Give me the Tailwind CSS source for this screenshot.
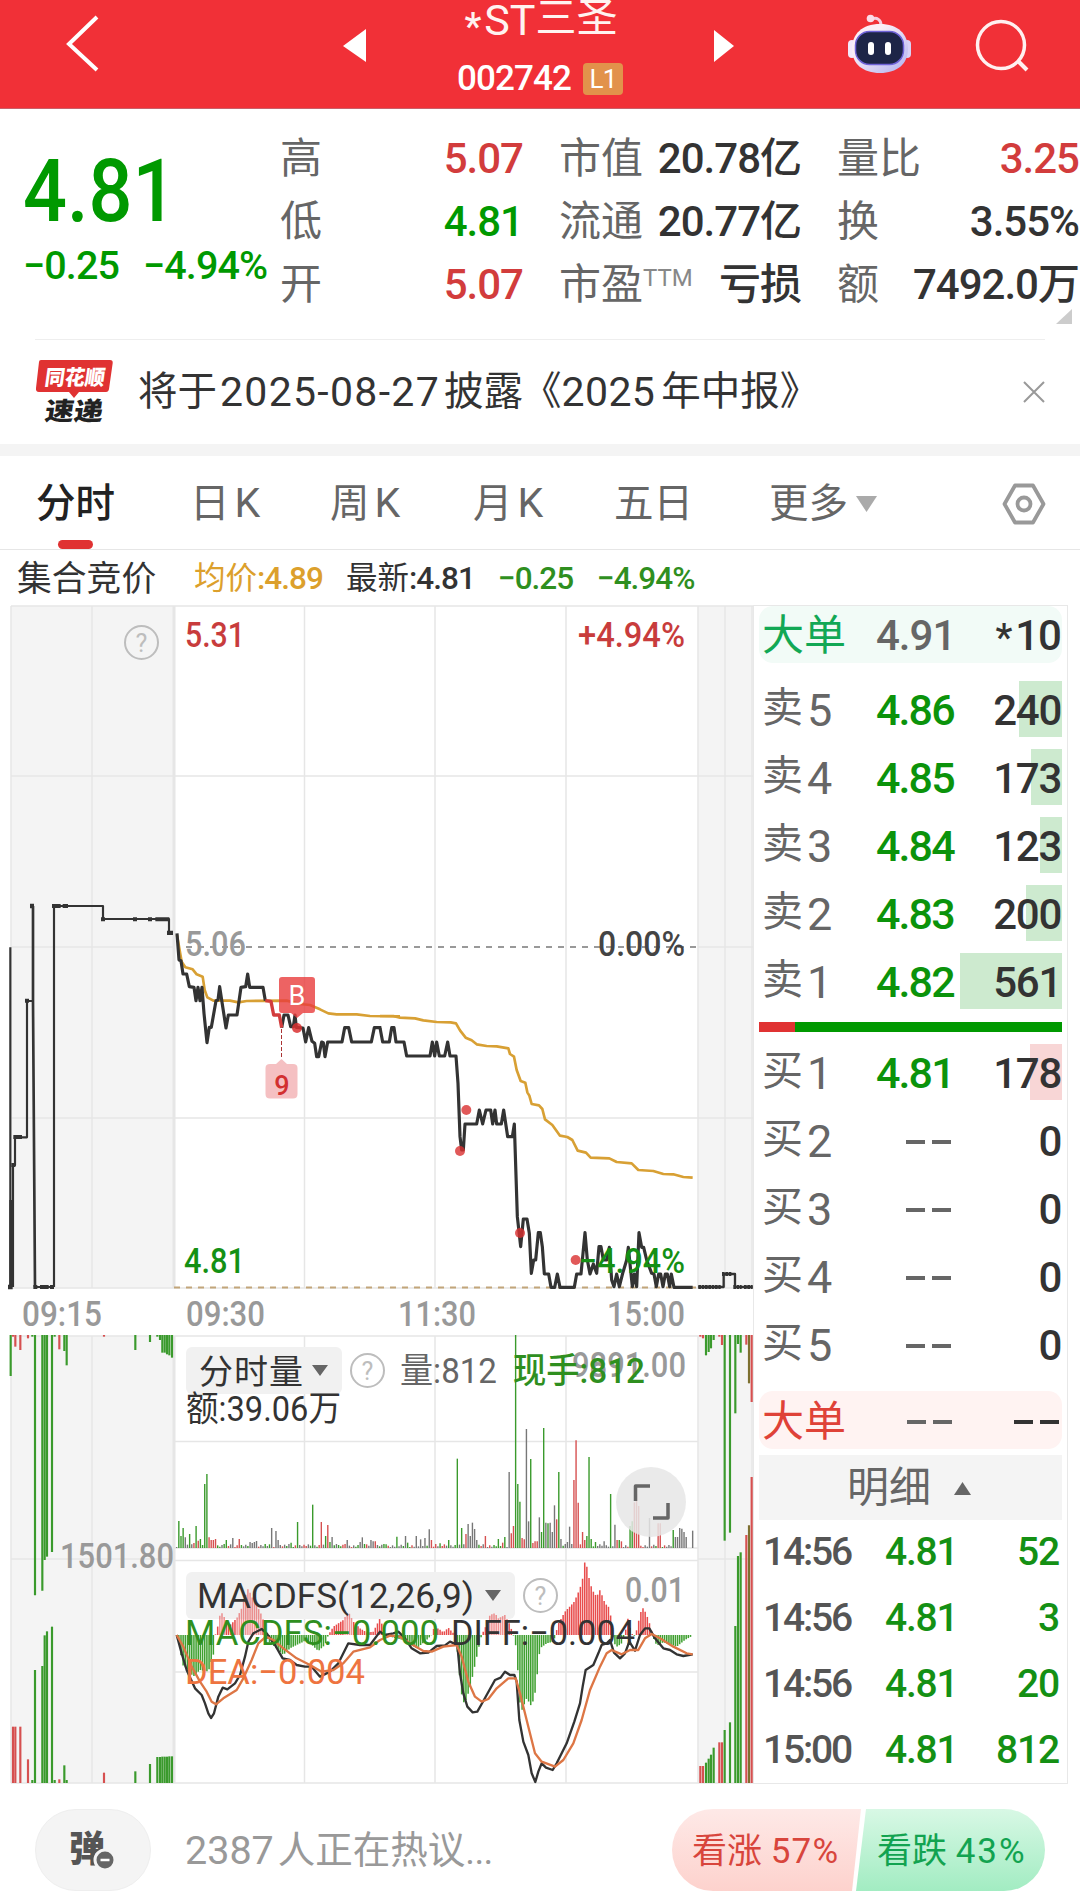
<!DOCTYPE html>
<html lang="zh-CN">
<head>
  <meta charset="UTF-8">
  <meta name="viewport" content="width=device-width, initial-scale=1.0">
  <title>*ST三圣 002742</title>
  <script src="https://cdn.jsdelivr.net/npm/@tailwindcss/browser@4"></script>
</head>
<body class="w-[1080px] h-[1893px] overflow-hidden bg-white text-[#333] font-['Roboto','Noto_Sans_CJK_SC',sans-serif] leading-none whitespace-nowrap">

  <!-- Header -->
  <header class="h-[109px] bg-[#f13037] text-white flex items-start border-b border-[#c9606a]">
    <svg class="w-[120px] h-[108px] shrink-0" viewBox="0 0 120 108" fill="none" stroke="#fff" stroke-width="4"><path d="M97 17L69 44L97 70"/></svg>
    <svg class="w-[70px] h-[108px] ml-[215px]" viewBox="335 0 70 108" fill="#fff"><path d="M343 46L366 29V62Z"/></svg>
    <div class="w-[270px] flex flex-col items-center pl-[2px]">
      <div class="h-[44px] flex items-start text-[40px] leading-[40px] text-[#fff3f0]"><span class="mr-[3px] text-[38px] font-medium mt-[7px]">*</span><span class="text-[43px]">ST</span><span class="text-[41px] -mt-[2px]">三圣</span></div>
      <div class="flex items-center mt-[17px] text-[35px] font-medium -tracking-[0.9px]">002742<span class="ml-[12px] mr-[2px] w-[40px] h-[32px] rounded-sm bg-[#e2924b] text-[26px] font-normal flex items-center justify-center">L1</span></div>
    </div>
    <svg class="w-[50px] h-[108px] ml-[30px]" viewBox="705 0 50 108" fill="#fff"><path d="M734 46L714 30V62Z"/></svg>
    <svg class="w-[325px] h-[108px]" viewBox="755 0 325 108" fill="none">
      <defs>
        <linearGradient id="head" x1="0" y1="0" x2="1" y2="1"><stop offset=".3" stop-color="#fbeef6"/><stop offset="1" stop-color="#aeb0f0"/></linearGradient>
      </defs>
      <path d="M881 25C881 20 877 17 872 19" stroke="#f6cfe0" stroke-width="3"/>
      <circle cx="870.500" cy="18.500" r="3.800" fill="#fbdce8"/>
      <rect x="848" y="40" width="8" height="18" rx="4" fill="#f3e9fb"/>
      <rect x="903" y="40" width="8" height="18" rx="4" fill="#d9d3f6"/>
      <path d="M880 24C898 24 908 34 908 49C908 64 897 73 880 73C863 73 852 64 852 49C852 34 862 24 880 24Z" fill="url(#head)"/>
      <rect x="855.500" y="31.500" width="48" height="33" rx="14" fill="#1d2547" stroke="#6f63d8" stroke-width="1.500"/>
      <rect x="868" y="42" width="6" height="13" rx="3" fill="#fff"/>
      <rect x="885" y="42" width="6" height="13" rx="3" fill="#fff"/>
      <circle cx="1001" cy="45" r="23.500" stroke="#fff0f0" stroke-width="3.500"/>
      <path d="M1018 61L1027 70" stroke="#fff0f0" stroke-width="4"/>
    </svg>
  </header>

  <!-- Quote summary -->
  <section class="relative h-[230px] flex">
    <div class="w-[281px] shrink-0 pt-[39px] pl-[23px] text-[#009900] font-medium">
      <div class="text-[87px] origin-left scale-x-[.89]">4.81</div>
      <div class="flex mt-[11px] text-[39.5px] -tracking-[0.9px]"><span class="w-[120px]">−0.25</span><span>−4.94%</span></div>
    </div>
    <div class="grid grid-cols-[242px_241px_241px] gap-x-[37px] auto-rows-[63px] items-center pt-[18px] text-[42px] text-[#333] h-[208px] [&>div]:flex [&>div]:justify-between [&>div]:items-center [&_b]:font-medium [&_b]:-tracking-[1px] [&_i]:not-italic [&_i]:text-[#666] [&_i]:-ml-px">
      <div><i>高</i><b class="text-[#d23c3c] -tracking-[1.8px]">5.07</b></div>
      <div><i>市值</i><b>20.78亿</b></div>
      <div><i>量比</i><b class="text-[#d23c3c] -tracking-[1.8px]">3.25</b></div>
      <div><i>低</i><b class="text-[#009900] -tracking-[1.6px]">4.81</b></div>
      <div><i>流通</i><b>20.77亿</b></div>
      <div><i>换</i><b>3.55%</b></div>
      <div><i>开</i><b class="text-[#d23c3c] -tracking-[1.8px]">5.07</b></div>
      <div><i class="flex">市盈<sup class="text-[24px] top-0 mt-[2px] text-[#888] leading-none">TTM</sup></i><b>亏损</b></div>
      <div><i>额</i><b>7492.0万</b></div>
    </div>
    <svg class="absolute left-[1056px] top-[200px] w-[16px] h-[15px]" viewBox="0 0 16 15"><path d="M16 0V15H0Z" fill="#ccc"/></svg>
  </section>

  <!-- Notice -->
  <section class="mx-[35px] h-[105px] border-t border-[#eee] flex items-center">
    <div class="w-[103px] shrink-0">
      <svg class="w-[80px] h-[70px]" viewBox="35 357 80 70" font-family="'Noto Sans CJK SC'" font-weight="900">
        <path d="M41 360H110Q113 360 112.700 363L109 389Q108.500 392 106 392H79L74 398L69 392H39Q35.500 392 36 388L39 362Q39 360 41 360Z" fill="#e03232"/>
        <text transform="translate(44 384.500) skewX(-8)" font-size="21" textLength="60" lengthAdjust="spacingAndGlyphs" fill="#fff">同花顺</text>
        <text transform="translate(44 420) skewX(-8)" font-size="25" textLength="58" lengthAdjust="spacingAndGlyphs" fill="#222">速递</text>
      </svg>
    </div>
    <div class="text-[39.5px] flex items-center"><span>将于</span><span class="ml-[3px] text-[41px] tracking-[1.3px]">2025-08-27</span><span class="ml-[4px]">披露</span><span class="-ml-[1px]">《</span><span class="text-[41px] tracking-[0.4px]">2025</span><span class="ml-[6px]">年中报》</span></div>
    <svg class="w-[22px] h-[22px] ml-auto" viewBox="0 0 22 22" stroke="#999" stroke-width="2"><path d="M1 1L21 21M21 1L1 21"/></svg>
  </section>
  <div class="h-[12px] bg-[#f4f4f4]"></div>

  <!-- Period tabs -->
  <nav class="relative h-[94px] border-b border-[#e6e6e6] flex items-center pt-[2px] pl-[36px] pr-[34px] text-[39.5px] text-[#666]">
    <div class="w-[154px] text-[#222] font-medium">分时</div>
    <div class="w-[140px]">日<span class="ml-[5px] text-[41px]">K</span></div>
    <div class="w-[143px]">周<span class="ml-[5px] text-[41px]">K</span></div>
    <div class="w-[141px]">月<span class="ml-[5px] text-[41px]">K</span></div>
    <div class="w-[155px]">五日</div>
    <div class="flex items-center">更多<svg class="ml-[8px] w-[21px] h-[16px]" viewBox="0 0 21 16"><path d="M0 0H21L10.500 16Z" fill="#aaa"/></svg></div>
    <svg class="ml-auto w-[44px] h-[44px]" viewBox="0 0 44 44" fill="none" stroke="#999" stroke-width="3.800" stroke-linejoin="round"><path d="M13 3.500H31L41.500 22L31 40.500H13L2.500 22Z"/><circle cx="22" cy="22" r="6.500"/></svg>
    <div class="absolute left-[58px] bottom-0 w-[35px] h-[9px] rounded-md bg-[#e03232]"></div>
  </nav>

  <div class="h-[55px] flex items-center pt-[3px] text-[31.5px] [&_b]:font-medium [&_b]:-tracking-[1px]">
    <span class="w-[176px] pl-[17px] text-[34.8px]">集合竞价</span>
    <span class="w-[152px] pl-[18px] text-[#dca02c]">均价<b class="-tracking-[1.8px]">:4.89</b></span>
    <span class="w-[170px] pl-[18px]">最新<b class="-tracking-[1.8px]">:4.81</b></span>
    <b class="w-[99px] text-[#2f8f1f]">−0.25</b>
    <b class="text-[#2f8f1f]">−4.94%</b>
  </div>

  <main class="flex h-[1179px]">
    <!-- Intraday, volume and MACD charts; user units are page pixels -->
    <svg class="w-[753px] h-[1179px] shrink-0" viewBox="0 605 753 1179" font-weight="500" font-size="35" fill="none" stroke-linejoin="round">
      <path d="M11 606H174V1288H11ZM698 606H753V1288H698ZM11 1336H174V1783H11ZM698 1336H753V1783H698Z" fill="#f4f4f4"/>
      <g stroke="#e6e6e6" stroke-width="1.500">
        <path d="M11 606H753M11 776H753M11 947H174M698 947H753M11 1118H753M11 1288H753"/>
        <path d="M11 606V1288M92 606V1288M304.500 606V1288M435 606V1288M566 606V1288M698 606V1288M725 606V1288M752 606V1288"/>
        <path d="M11 1336H753M174 1441.500H698M174 1548H698M174 1560.500H698M174 1672H698M11 1559H174M698 1559H753M11 1783H753"/>
        <path d="M11 1336V1783M92 1336V1783M304.500 1336V1783M435 1336V1783M566 1336V1783M698 1336V1783M725 1336V1783M752 1336V1783"/>
        <path d="M174 606V1288M174 1336V1783" stroke-width="3"/>
      </g>
      <path d="M186 947H698" stroke="#999" stroke-width="1.900" stroke-dasharray="6 6"/>
      <path d="M174 1287.500H698" stroke="#c2a57a" stroke-width="1.900" stroke-dasharray="6 6"/>

      <g id="auction"></g>
      <g id="volume"></g>

      <!-- full screen button -->
      <circle cx="651" cy="1502" r="35" fill="#e6e6e6" fill-opacity=".85"/>
      <path d="M635.500 1501V1486H650M653 1518H668V1503" stroke="#666" stroke-width="3.500"/>

      <!-- indicator selectors -->
      <rect x="186" y="1347" width="156" height="47" rx="6" fill="#f1f1f1"/>
      <rect x="186" y="1572" width="329" height="47" rx="6" fill="#f1f1f1"/>
      <path d="M312 1365H328L320 1376ZM485 1590H501L493 1601Z" fill="#666"/>
      <g stroke="#bdbdbd" stroke-width="2">
        <circle cx="141.500" cy="642.500" r="16.500"/><circle cx="367.500" cy="1370.500" r="16.500"/><circle cx="540.500" cy="1595.500" r="16.500"/>
      </g>
      <g fill="#bdbdbd" font-size="25" font-weight="400" text-anchor="middle">
        <text x="141.500" y="651.500">?</text><text x="367.500" y="1379.500">?</text><text x="540.500" y="1604.500">?</text>
      </g>

      <g id="macd"></g>

      <!-- price lines -->
      <g transform="translate(0 880) scale(.33333)" stroke-width="7" stroke="#333">
        <path d="M31 202V1221M39 1221V856H45V772H81V363H97M162 1221V78H309V117H507V158H516M106 1221H162" stroke-width="6.500"/>
        <path d="M34 1221V960" stroke-width="12"/>
        <path d="M99 78V363L105 1221" stroke-width="8"/>
        <path stroke="none" fill="#333" d="M24 1214h14v14h-14zM34 849h12v12h-12zM40 765h26v12h-26zM75 356h12v12h-12zM90 71h12v14h-12zM100 1215h12v12h-12zM120 1215h26v12h-26zM150 1215h12v12h-12zM156 72h26v12h-26zM188 72h16v12h-16zM303 112h12v12h-12zM399 112h12v12h-12zM444 112h12v12h-12zM466 112h42v12h-42zM501 152h18v13h-18z"/>
        <path stroke="#d8a034" d="M531 165L545 245L556 262L578 268L590 283L608 290L614 330L622 352L640 362L690 362L715 367L740 363L860 362L900 372L930 375L960 388L985 400L1010 403L1070 403L1110 408L1200 409" stroke-width="8"/>
        <path d="M531 160L537 240L543 242L549 282L560 282L568 320L582 322L588 362L594 322L600 362L606 322L612 400L621 488L628 442L634 442L648 362L654 360L659 320L665 360L678 444L685 405L711 405L723 322L737 320L743 282L749 322L789 322L796 362M845 443L852 405L864 405L872 440L880 440L885 405L889 442L909 444L917 486L926 443L936 484L944 490L950 530L956 530L965 486L970 488L975 530L983 486L1026 486L1034 443L1046 443L1055 486L1114 486L1123 443L1144 443" stroke-width="9.500"/>
        <path d="M796 362L813 364L821 405L838 405L845 443" stroke="#d23c3c" stroke-width="10"/>
      </g>
      <g transform="translate(380 960) scale(.33333)" stroke-width="7" stroke="#333">
        <path stroke="#d8a034" stroke-width="8" d="M0 168L40 168L60 173L105 175L130 181L170 186L212 187L228 190L240 211L257 233L275 241L290 253L320 258L350 259L385 265L390 282L402 290L410 330L422 363L436 368L442 397L448 407L455 432L477 436L487 447L495 478L517 495L540 527L562 531L577 540L593 572L618 578L632 593L688 595L710 606L755 610L775 630L820 633L850 642L880 643L910 651L938 653"/>
        <path stroke-width="9.500" d="M0 203L8 246L28 246L35 203L42 203L48 246L72 246L80 288L150 288L157 246L164 288L170 246L178 288L194 288L203 246L210 288L228 288L234 370L240 530L245 570L250 570L255 492L290 492L298 450L308 492L318 450L332 450L338 492L345 450L350 492L364 492L371 450L383 530L397 530L403 492L412 770L422 860L430 777L441 777L448 820L454 940L461 900L467 900L475 818L481 818L487 860L493 942L506 942L513 982L524 982L532 942L540 982L583 982L590 942L603 942L615 818L622 900L630 942L640 912L650 940L657 860L663 860L670 900L680 900L688 862L695 960L702 980L710 942L718 980L728 940L740 900L745 862L757 980L763 942L770 980L777 818L785 862L791 862L800 900L815 940L822 942L829 980L836 942L842 942L849 980L856 942L862 942L869 980L874 942L882 982L938 982"/>
        <path d="M955 981H1031V942H1065V981H1118"/>
        <path d="M955 981H1022M1060 981H1085M1092 981H1118M1026 942H1056" stroke-width="12" stroke-dasharray="8 2"/>
        <g fill="#d93030" fill-opacity=".8" stroke="none"><circle cx="259" cy="450" r="15"/><circle cx="240" cy="573" r="15"/><circle cx="420" cy="819" r="15"/><circle cx="587" cy="900" r="15"/></g>
      </g>

      <!-- trade markers -->
      <circle cx="297" cy="1028" r="5" fill="#d93030" fill-opacity=".85"/>
      <path d="M282 977H312Q315 977 315 980V1010Q315 1013 312 1013H303L297 1018L291 1013H282Q279 1013 279 1010V980Q279 977 282 977Z" fill="#e93c3c" fill-opacity=".8"/>
      <text x="297" y="1004.500" font-size="27" font-weight="400" text-anchor="middle" fill="#fff">B</text>
      <path d="M281.500 1029V1059" stroke="#a33" stroke-dasharray="4 2"/>
      <path d="M270 1064H276L281.500 1059L287 1064H293Q297.500 1064 297.500 1068V1094Q297.500 1098.500 293 1098.500H270Q265.500 1098.500 265.500 1094V1068Q265.500 1064 270 1064Z" fill="#f5c0c2"/>
      <text x="282" y="1094.500" font-size="27" text-anchor="middle" fill="#d23030">9</text>

      <g>
        <text x="185" y="647" textLength="60" lengthAdjust="spacingAndGlyphs" fill="#c83c3c">5.31</text>
        <text x="578" y="647" textLength="107" lengthAdjust="spacingAndGlyphs" fill="#c83c3c">+4.94%</text>
        <text x="185" y="956" textLength="61" lengthAdjust="spacingAndGlyphs" fill="#999">5.06</text>
        <text x="598" y="956" textLength="87" lengthAdjust="spacingAndGlyphs" fill="#444">0.00%</text>
        <text x="184" y="1273" textLength="61" lengthAdjust="spacingAndGlyphs" fill="#149014">4.81</text>
        <text x="579" y="1273" textLength="106" lengthAdjust="spacingAndGlyphs" fill="#149014">−4.94%</text>
        <g fill="#999">
          <text x="22" y="1326" textLength="80" lengthAdjust="spacingAndGlyphs">09:15</text>
          <text x="186" y="1326" textLength="79" lengthAdjust="spacingAndGlyphs">09:30</text>
          <text x="398" y="1326" textLength="78" lengthAdjust="spacingAndGlyphs">11:30</text>
          <text x="607" y="1326" textLength="78" lengthAdjust="spacingAndGlyphs">15:00</text>
          <text x="60" y="1568" textLength="114" lengthAdjust="spacingAndGlyphs">1501.80</text>
          <text x="572" y="1377" textLength="114" lengthAdjust="spacingAndGlyphs">9891.00</text>
          <text x="625" y="1602" textLength="60" lengthAdjust="spacingAndGlyphs">0.01</text>
        </g>
        <g font-weight="400">
          <text x="199" y="1383.500" textLength="104" font-size="34" fill="#333">分时量</text>
          <text x="400" y="1383" textLength="97" lengthAdjust="spacingAndGlyphs" fill="#666">量:812</text>
          <text x="513" y="1383" textLength="132" lengthAdjust="spacingAndGlyphs" fill="#2f8f1f" font-weight="500">现手:812</text>
          <text x="186" y="1421" textLength="155" lengthAdjust="spacingAndGlyphs" fill="#333">额:39.06万</text>
          <text x="197" y="1608" textLength="277" lengthAdjust="spacingAndGlyphs" fill="#333">MACDFS(12,26,9)</text>
          <text x="185" y="1645" textLength="254" lengthAdjust="spacingAndGlyphs" fill="#2f8f1f">MACDFS:−0.000</text>
          <text x="451" y="1645" textLength="184" lengthAdjust="spacingAndGlyphs" fill="#333">DIFF:−0.004</text>
          <text x="185" y="1684" textLength="180" lengthAdjust="spacingAndGlyphs" fill="#ee7440">DEA:−0.004</text>
        </g>
      </g>
    </svg>

    <!-- Order book -->
    <aside class="w-[315px] shrink-0 border-t border-x border-[#e8e8e8] border-b pl-[5px] pr-[5px] text-[42px] text-[#333]">
      <div class="h-[57px] rounded-[14px] bg-[#f2fbf7] flex items-center pt-[2px] pl-[3px] pr-[1px] font-medium"><span class="w-[114px] text-[42px] font-normal text-[#12a855]">大单</span><span class="w-[100px] -tracking-[1px] text-[#666]">4.91</span><span class="ml-auto -tracking-[1px] flex"><span class="text-[38px] mt-1">*</span><span class="ml-[4px]">10</span></span></div>
      <div id="asks" class="pt-[18px]"></div>
      <div class="h-[10px] mt-px bg-[#009900]"><div class="w-[36px] h-full bg-[#e03232]"></div></div>
      <div id="bids" class="pt-[12px]"></div>
      <div class="mt-[7px] h-[58px] rounded-[14px] bg-[#fff3f2] flex items-center pt-[3px] pl-[3px] pr-[3px] font-medium"><span class="w-[145px] text-[42px] font-normal text-[#df4238]">大单</span><span class="text-[#666] flex gap-[7px]"><i class="w-[19px] h-[4px] bg-[#666]"></i><i class="w-[19px] h-[4px] bg-[#666]"></i></span><span class="ml-auto flex gap-[7px]"><i class="w-[19px] h-[4px] bg-[#333]"></i><i class="w-[19px] h-[4px] bg-[#333]"></i></span></div>
      <div class="mt-[6px] h-[65px] bg-[#f4f4f4] flex items-center pt-px pl-[88px] text-[42px] text-[#666]">明细<svg class="ml-[23px] w-[17px] h-[13px]" viewBox="0 0 17 13"><path d="M0 13L8.500 0L17 13Z" fill="#666"/></svg></div>
      <div id="trades" class="-mt-px"></div>
    </aside>
  </main>

  <!-- Comment bar -->
  <footer class="h-[109px] pt-[25px] px-[35px] flex items-start">
    <div class="relative w-[116px] h-[82px] rounded-full bg-[#f4f4f4] border border-[#eee] flex items-center pl-[33px] text-[36px] font-black text-[#555]">弹
      <svg class="absolute left-[57px] top-[38px] w-[24px] h-[24px]" viewBox="0 0 24 24"><circle cx="12" cy="12" r="10" fill="#666" stroke="#f4f4f4" stroke-width="3"/><path d="M7.500 12H16.500" stroke="#fff" stroke-width="2.500"/></svg>
    </div>
    <div class="h-[82px] pt-[2px] ml-[34px] flex items-center text-[37.5px] text-[#999]"><span class="text-[39.5px]">2387</span><span class="ml-[4px]">人正在热议</span><span class="text-[37px] -tracking-[0.6px]">...</span></div>
    <div class="relative ml-auto w-[373px] h-[82px] rounded-full overflow-hidden flex items-center pt-[2px] text-[35px]">
      <svg class="absolute inset-0 w-[373px] h-[82px]" viewBox="0 0 373 82">
        <defs>
          <linearGradient id="up" x1="0" y1="0" x2="0" y2="1"><stop stop-color="#fee9e7"/><stop offset="1" stop-color="#fdd2cd"/></linearGradient>
          <linearGradient id="down" x1="0" y1="0" x2="0" y2="1"><stop stop-color="#d8f8e5"/><stop offset="1" stop-color="#a2ecc2"/></linearGradient>
        </defs>
        <path d="M0 0H189L180 82H0Z" fill="url(#up)"/><path d="M194 0H373V82H184Z" fill="url(#down)"/>
      </svg>
      <span class="relative w-[184px] pl-[20px] text-[#d8453c]">看涨 <span class="tracking-[1.2px]">57%</span></span>
      <span class="relative pl-[21px] text-[#12a350]">看跌 <span class="tracking-[2px]">43%</span></span>
    </div>
  </footer>

  <script>
    const dashes = '<span class="flex gap-[7px] pl-[30px]"><i class="w-[19px] h-[4px] bg-[#666]"></i><i class="w-[19px] h-[4px] bg-[#666]"></i></span>';

    function level([side, n, price, vol, w], tint) {
      return `<div class="h-[68px] flex items-start"><div class="relative w-full h-[56px] flex items-center pt-[3px] pl-[3px] pr-[1px]">
        <div class="absolute right-0 top-0 h-full ${tint}" style="width:${w}px"></div>
        <span class="w-[114px] flex text-[#666] text-[41px]">${side}<span class="ml-[4px] text-[45px]">${n}</span></span>
        ${price ? `<span class="text-[#0b930b] font-medium text-[43px] -tracking-[1.9px]">${price}</span>` : dashes}
        <span class="relative ml-auto font-medium -tracking-[1.3px]">${vol}</span></div></div>`;
    }
    const asks = [['卖', 5, '4.86', 240, 43], ['卖', 4, '4.85', 173, 31], ['卖', 3, '4.84', 123, 22], ['卖', 2, '4.83', 200, 36], ['卖', 1, '4.82', 561, 102]];
    const bids = [['买', 1, '4.81', 178, 32], ['买', 2, '', 0, 0], ['买', 3, '', 0, 0], ['买', 4, '', 0, 0], ['买', 5, '', 0, 0]];
    document.getElementById('asks').innerHTML = asks.map(r => level(r, 'bg-[#cdeacf]')).join('');
    document.getElementById('bids').innerHTML = bids.map(r => level(r, 'bg-[#f8d6d6]')).join('');

    document.getElementById('trades').innerHTML = [['14:56', 52], ['14:56', 3], ['14:56', 20], ['15:00', 812]].map(([t, v]) =>
      `<div class="h-[66px] flex items-center pl-[4px] pr-[3px] text-[39px] font-medium text-[#149014] -tracking-[1.2px]"><span class="w-[122px] text-[#555] -tracking-[2.2px]">${t}</span><span>4.81</span><span class="ml-auto">${v}</span></div>`).join('');

    const colors = { g: '#3a9a2c', r: '#d65050', k: '#777', o: '#7d7030' };
    const bar = (x, y1, y2, c, w) => `<path d="M${x} ${y1}V${y2}" stroke="${colors[c]}" stroke-width="${w}"/>`;
    const wrap = s => `<g transform="translate(0 1320) scale(.33333)">${s}</g>`;

    // call auction panels: bars hanging from the top and rising from the bottom
    const hang = 'g32,168 r39,50 r46,80 r61,90 r84,55 g97,50 g105,826 g127,812 g134,720 g141,710 g156,696 g164,50 r178,88 g193,93 g200,136 r312,50 g406,90 g450,66 g472,50 g480,60 g487,98 g494,98 g501,103 g508,106 g516,113 ' +
      'r2101,50 r2109,55 g2118,106 g2126,96 g2133,85 g2141,60 r2158,50 r2166,75 g2174,662 g2190,638 g2206,280 g2214,72 g2222,98 r2239,74 o2247,190 r2255,246';
    const rise = 'r39,1220 r46,1220 r61,1220 r84,1318 g97,1380 g105,1050 g127,1038 g134,946 g141,934 g156,920 g164,1380 r178,1378 g193,1336 g200,1380 r312,1358 g406,1354 g450,1332 g472,1311 g480,1311 g487,1310 g494,1310 g501,1310 g508,1309 g516,1309 ' +
      'r2101,1338 r2109,1338 g2118,1328 g2126,1316 g2133,1304 g2141,1283 r2158,1267 r2166,1267 g2174,1230 g2190,1207 g2206,918 g2214,708 g2222,697 r2239,645 o2247,616 r2255,471';
    const parse = s => s.split(' ').map(t => [t[0], ...t.slice(1).split(',').map(Number)]);
    document.getElementById('auction').innerHTML = wrap(
      parse(hang).map(([c, x, y]) => bar(x, 45, y, c, 6.5)).join('') + parse(rise).map(([c, x, y]) => bar(x, y, 1389, c, 6.5)).join(''));

    // per-minute volume, one slot every 6.477 units
    const vol = 'g536,81 g543,36 g549,60 k556,32 g569,42 r582,15 g588,66 r594,22 g601,27 g614,192 g620,222 r627,32 r633,24 r640,24 r646,27 g672,12 g678,24 k698,30 r717,27 k748,18 k755,15 k762,18 k768,21 g795,12 k814,60 k827,51 k833,24 k865,12 g872,16 g891,78 g936,130 r962,78 g975,36 r981,69 g988,18 k994,33 k1007,12 r1033,12 k1040,24 k1078,18 k1085,32 g1091,12 k1110,24 k1117,20 r1124,20 g1150,12 ' +
      'g1188,34 k1214,36 g1220,16 k1252,36 k1259,24 k1265,26 k1278,30 k1285,56 r1297,24 r1310,12 g1317,14 r1343,24 g1349,24 g1369,56 g1375,268 g1382,102 g1388,60 r1395,93 r1401,42 k1407,72 k1414,36 k1420,76 k1427,57 k1433,24 r1459,36 g1492,27 g1498,27 r1505,16 g1517,33 k1530,228 r1537,44 r1543,66 g1549,639 g1556,192 g1562,139 r1569,30 r1575,26 k1581,357 k1588,80 g1594,267 r1601,15 r1607,20 r1614,20 k1620,92 g1627,48 g1633,360 k1640,76 g1646,74 k1652,76 k1659,48 k1665,128 r1672,86 g1678,228 k1685,27 k1698,12 k1704,18 k1710,64 k1717,12 r1723,204 r1730,323 r1736,136 ' +
      'r1749,48 r1755,24 g1762,36 g1768,273 g1775,27 g1788,18 k1813,20 g1833,162 k1846,70 r1852,24 g1859,24 r1865,20 g1891,66 g1897,80 r1904,137 r1910,162 r1917,126 k1949,90 r1975,74 r1981,74 g2020,54 k2027,33 k2033,33 k2039,60 k2046,58 k2052,48 k2059,33 k2078,52';
    const slots = {};
    parse(vol).forEach(([c, x, h]) => { slots[Math.round((x - 530) / 6.477)] = [c, h]; });
    let out = '';
    for (let i = 0; i < 240; i++) {
      if (i > 236 && i < 239) continue;
      const [c, h] = slots[i] || ['kgkrkkrg'[(i * 7 + (i >> 2)) % 8], 3 + (i * 5) % 9];
      out += bar((530 + i * 6.477).toFixed(1), 684 - h, 684, c, 4.2);
    }
    document.getElementById('volume').innerHTML = wrap(out);

    // MACD histogram, interpolated between turning points
    const hist = [[530,0],[536,-20],[548,-90],[560,-100],[580,-125],[600,-105],[625,-110],[640,-60],[646,0],[652,20],[660,60],[666,65],[675,50],[690,30],[710,50],[725,80],[735,115],[745,140],[755,115],[770,90],[785,60],[797,20],[800,0],[806,-20],[830,-40],[850,-60],[870,-40],[890,-30],[920,-15],[955,-48],[975,-30],[985,0],[1000,25],[1030,45],[1045,70],[1060,40],[1080,20],[1100,8],[1120,10],[1140,50],[1150,20],[1160,0],
      [1180,-8],[1210,-15],[1250,-40],[1280,-15],[1295,0],[1298,18],[1315,20],[1330,8],[1345,22],[1358,8],[1365,0],[1369,-10],[1375,-90],[1388,-205],[1398,-195],[1410,-160],[1425,-90],[1440,-20],[1445,0],[1457,25],[1470,60],[1485,66],[1495,50],[1515,60],[1530,30],[1540,0],[1549,-40],[1562,-235],[1580,-190],[1595,-215],[1606,-170],[1620,-40],[1640,-25],[1660,-20],[1667,0],[1673,30],[1695,70],[1723,100],[1740,140],[1748,170],[1755,224],[1762,200],[1770,155],[1780,130],[1790,115],[1800,135],[1815,95],[1830,80],[1837,0],[1842,-25],[1852,-35],[1865,-25],[1875,5],[1885,55],[1892,10],[1902,-5],[1912,20],[1920,65],[1930,82],[1940,60],[1952,25],[1958,0],[1965,-25],[1975,-30],[1990,-22],[2030,-35],[2055,-15],[2078,-2]];
    const at = x => {
      const j = Math.max(1, hist.findIndex(p => p[0] >= x));
      const [a, b] = [hist[j - 1], hist[j]];
      return a[1] + (b[1] - a[1]) * (x - a[0]) / (b[0] - a[0]);
    };
    let m = '';
    for (let i = 0; i < 239; i++) {
      const x = 530 + i * 6.477, h = at(x);
      m += `<path d="M${x.toFixed(1)} 945V${(945 - h).toFixed(1)}" stroke="${h > 0 ? '#e84c4c' : '#3fa030'}" stroke-opacity="${h > 48 && x < 1540 ? .6 : 1}" stroke-width="4.600"/>`;
    }
    const line = (pts, c) => `<polyline points="${pts}" stroke="${c}" stroke-width="7"/>`;
    m += line('530,945 545,1000 560,1050 585,1105 605,1125 615,1150 625,1180 633,1194 642,1180 655,1130 668,1103 682,1108 705,1090 720,1065 735,1010 745,965 760,940 785,927 800,940 825,975 848,1015 870,1020 890,1035 915,1040 935,1040 960,1070 990,1055 1015,1030 1030,1000 1045,970 1080,975 1110,975 1140,935 1155,945 1180,940 1195,935 1215,955 1235,985 1260,1000 1285,998 1310,978 1335,976 1350,965 1372,975 1380,1060 1390,1120 1402,1160 1418,1177 1432,1175 1445,1152 1460,1125 1485,1080 1502,1073 1515,1055 1530,1065 1543,1065 1550,1085 1558,1200 1570,1265 1585,1305 1595,1360 1606,1386 1615,1355 1625,1330 1638,1343 1658,1350 1670,1330 1700,1270 1723,1205 1740,1150 1748,1100 1757,1050 1780,1035 1795,1000 1805,975 1820,970 1830,960 1842,998 1860,1015 1875,1000 1888,965 1905,992 1920,945 1935,925 1948,925 1965,955 1990,985 2010,990 2030,1003 2050,1008 2078,1003', '#333');
    m += line('530,945 550,980 575,1040 600,1085 620,1115 635,1145 648,1153 670,1135 710,1110 730,1075 755,1020 775,970 798,950 820,960 850,985 890,1015 930,1035 965,1055 1000,1050 1030,1030 1060,995 1110,982 1140,960 1170,947 1200,950 1230,970 1270,993 1295,995 1330,980 1370,975 1385,1010 1405,1085 1425,1130 1445,1145 1465,1137 1490,1105 1525,1075 1547,1075 1560,1120 1585,1220 1605,1300 1625,1325 1665,1340 1690,1320 1720,1270 1745,1200 1770,1110 1800,1040 1820,1000 1835,990 1865,1003 1890,990 1915,990 1935,955 1955,942 1980,955 2020,980 2060,1000 2078,1003', '#dd7645');
    document.getElementById('macd').innerHTML = wrap(m);
  </script>

</body>
</html>
